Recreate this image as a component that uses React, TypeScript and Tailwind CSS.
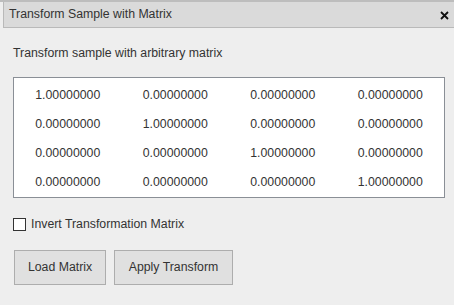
const matrix = [
  ["1.00000000", "0.00000000", "0.00000000", "0.00000000"],
  ["0.00000000", "1.00000000", "0.00000000", "0.00000000"],
  ["0.00000000", "0.00000000", "1.00000000", "0.00000000"],
  ["0.00000000", "0.00000000", "0.00000000", "1.00000000"],
];

const App = () => {
  return (
    <div
      className="w-[454px] h-[305px] bg-[#eeeeee] text-[#333333] text-[12.3px] overflow-hidden"
      style={{ fontFamily: '"Liberation Sans", Arial, sans-serif' }}
    >
      <div className="h-[2px] bg-[#bdbdbd]" />
      <div className="ml-[3px] h-[26px] flex items-center justify-between bg-[#dadada] border-l border-b border-[#b9b9b9] pl-[5px] pr-[5px]">
        <span className="-mt-[1px]">Transform Sample with Matrix</span>
        <svg width="9" height="9" viewBox="0 0 9 9" className="mt-[1px]">
          <path d="M1 1 L8 8 M8 1 L1 8" stroke="#111" strokeWidth="1.8" />
        </svg>
      </div>
      <div className="px-[13px]">
        <div className="mt-[18px] leading-[14px]">
          Transform sample with arbitrary matrix
        </div>
        <div className="mt-[17px] w-[432px] h-[121px] bg-white border border-[#8a8f96] pt-[3px]">
          {matrix.map((row, i) => (
            <div key={i} className="grid grid-cols-4 h-[29px] items-center">
              {row.map((v, j) => (
                <div key={j} className="text-center">
                  {v}
                </div>
              ))}
            </div>
          ))}
        </div>
        <label className="mt-[19px] flex items-center gap-[5px] h-[14px]">
          <span className="w-[13px] h-[13px] bg-white border border-[#333333]" />
          <span>Invert Transformation Matrix</span>
        </label>
        <div className="mt-[19px] flex gap-[8px] pl-[1px]">
          <button className="w-[92px] h-[35px] bg-[#e0e0e0] border border-[#adadad]">
            Load Matrix
          </button>
          <button className="w-[119px] h-[35px] bg-[#e0e0e0] border border-[#adadad]">
            Apply Transform
          </button>
        </div>
      </div>
    </div>
  );
};

export default App;
